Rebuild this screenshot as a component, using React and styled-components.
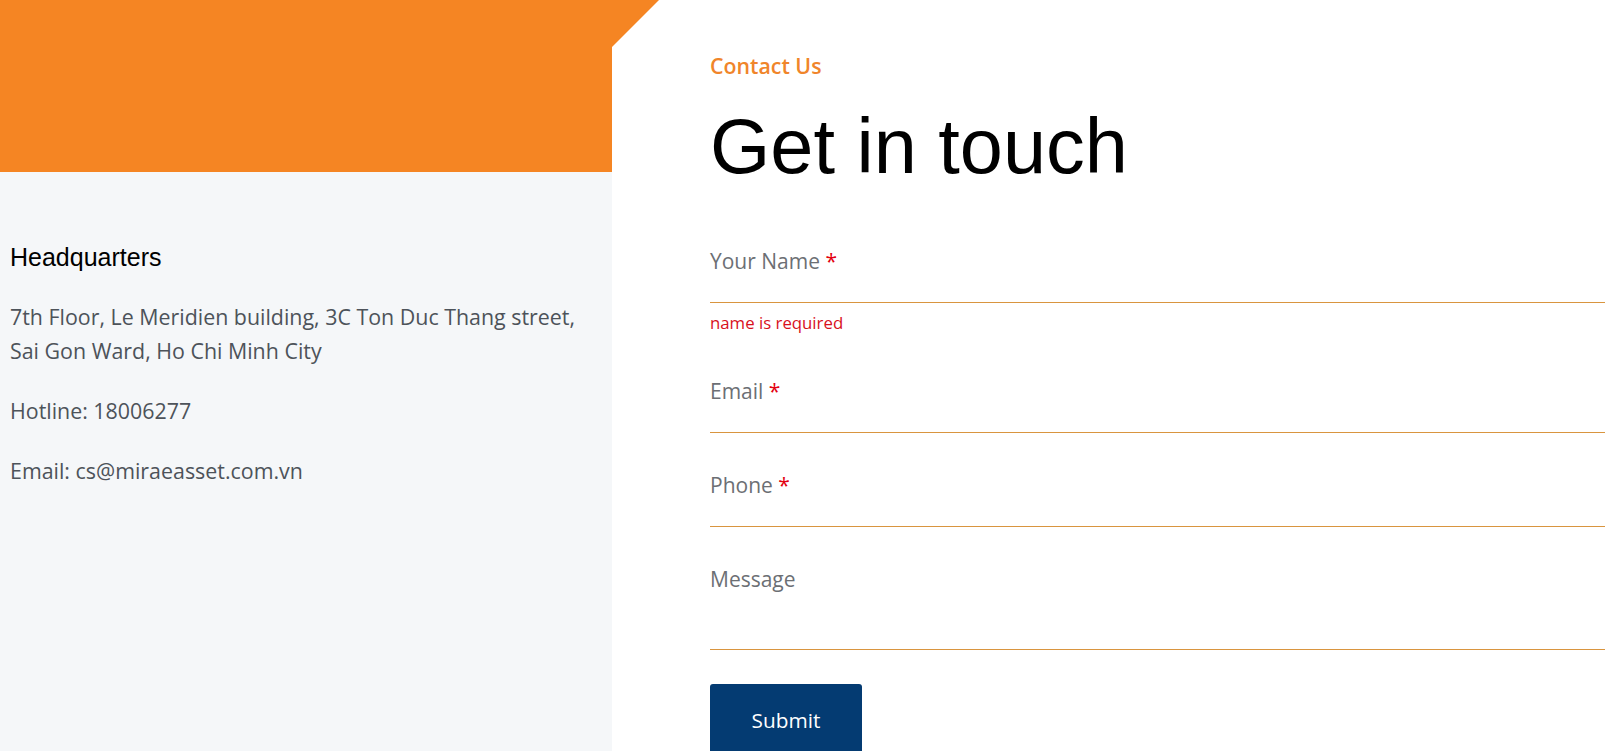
import React from "react";
import styled, { createGlobalStyle } from "styled-components";

const Global = createGlobalStyle`
  html, body { margin: 0; padding: 0; overflow: hidden; background: #ffffff; }
  * { box-sizing: border-box; }
`;

const Page = styled.div`
  display: grid;
  grid-template-columns: 612px 1fr;
  height: 751px;
  overflow: hidden;
`;

const Aside = styled.aside`
  display: flex;
  flex-direction: column;
  background: #f5f7f9;
`;

const Banner = styled.div`
  height: 172px;
  background: #f58523;
`;

const Info = styled.div`
  padding: 72px 10px 0 10px;
`;

const InfoTitle = styled.h3`
  margin: 0 0 30px;
  font-family: "Liberation Sans", Arial, sans-serif;
  font-weight: 400;
  font-size: 25px;
  line-height: 26px;
  color: #000;
`;

const InfoText = styled.p`
  margin: 0 0 26px;
  font-family: "Open Sans", "Noto Sans", sans-serif;
  font-size: 21.4px;
  line-height: 34px;
  color: #4d535a;
`;

const Main = styled.main`
  position: relative;
  padding: 52px 0 0 98px;
  background: #fff;
`;

const Corner = styled.div`
  position: absolute;
  left: 0;
  top: 0;
  width: 47px;
  height: 47px;
  background: #f58523;
  clip-path: polygon(0 0, 100% 0, 0 100%);
`;

const Eyebrow = styled.div`
  font-family: "Open Sans", "Noto Sans", sans-serif;
  font-weight: 600;
  font-size: 21.3px;
  line-height: 28px;
  color: #f0852a;
  margin-bottom: 21px;
`;

const Title = styled.h1`
  margin: 0;
  font-family: "Liberation Sans", Arial, sans-serif;
  font-weight: 400;
  font-size: 77.5px;
  line-height: 91px;
  color: #000;
`;

const Form = styled.form`
  display: flex;
  flex-direction: column;
  align-items: flex-start;
  margin-top: 17px;
`;

const Field = styled.label`
  display: block;
  width: 100%;
  padding-top: 38px;
`;

const FieldBox = styled.div`
  padding-bottom: ${(p) => (p.$tall ? 56 : 27)}px;
  border-bottom: 1px solid #d9953f;
`;

const LabelText = styled.span`
  display: block;
  font-family: "Open Sans", "Noto Sans", sans-serif;
  font-size: 21px;
  line-height: 28px;
  color: #6c6f74;
`;

const Star = styled.span`
  color: #e3000f;
`;

const ErrorText = styled.div`
  margin: 9px 0 5px;
  font-family: "Open Sans", "Noto Sans", sans-serif;
  font-size: 16.8px;
  line-height: 22px;
  color: #d8101c;
`;

const Submit = styled.button`
  margin-top: 34px;
  min-width: 152px;
  padding: 22px 40px;
  border: none;
  border-radius: 3px;
  background: #043b72;
  color: #fff;
  font-family: "Open Sans", "Noto Sans", sans-serif;
  font-size: 20.8px;
  line-height: 28px;
  cursor: pointer;
`;

const fields = [
  { label: "Your Name", required: true, error: "name is required" },
  { label: "Email", required: true },
  { label: "Phone", required: true },
  { label: "Message", tall: true },
];

export default function App() {
  return (
    <>
      <Global />
      <Page>
        <Aside>
          <Banner />
          <Info>
            <InfoTitle>Headquarters</InfoTitle>
            <InfoText>
              7th Floor, Le Meridien building, 3C Ton Duc Thang street,
              <br />
              Sai Gon Ward, Ho Chi Minh City
            </InfoText>
            <InfoText>Hotline: 18006277</InfoText>
            <InfoText>Email: cs@miraeasset.com.vn</InfoText>
          </Info>
        </Aside>
        <Main>
          <Corner />
          <Eyebrow>Contact Us</Eyebrow>
          <Title>Get in touch</Title>
          <Form onSubmit={(e) => e.preventDefault()}>
            {fields.map((f) => (
              <React.Fragment key={f.label}>
                <Field>
                  <FieldBox $tall={f.tall}>
                    <LabelText>
                      {f.label}
                      {f.required && <Star> *</Star>}
                    </LabelText>
                  </FieldBox>
                </Field>
                {f.error && <ErrorText>{f.error}</ErrorText>}
              </React.Fragment>
            ))}
            <Submit type="submit">Submit</Submit>
          </Form>
        </Main>
      </Page>
    </>
  );
}
